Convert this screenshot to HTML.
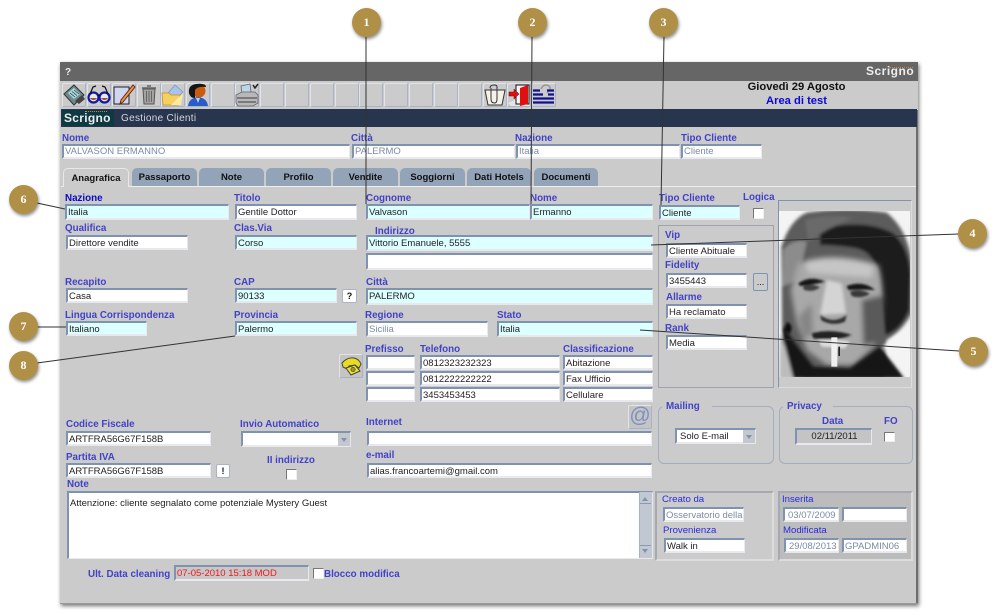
<!DOCTYPE html>
<html lang="it"><head><meta charset="utf-8"><title>Gestione Clienti</title>
<style>
html,body{margin:0;padding:0;background:#fff}
body{width:1000px;height:611px;position:relative;overflow:hidden;font-family:"Liberation Sans",Arial,sans-serif}
#w{position:absolute;left:60px;top:62px;width:858px;height:542px;background:#cbcbcb;box-shadow:1px 2px 4px rgba(0,0,0,.55)}
#c{position:absolute;left:0;top:0;width:1000px;height:611px;filter:blur(.3px)}
.f{position:absolute;box-sizing:border-box;background:#fff;border-style:solid;border-width:2px 1px 2px 2px;border-color:#7f93b0 #e8e9ee #e8e9ee #7f93b0;font-size:9.5px;line-height:13px;padding-left:1px;color:#222;white-space:nowrap;overflow:hidden}
.a{background:#dcffff}
.d{color:#7b8ba8}
.l{position:absolute;font-size:9.8px;font-weight:bold;line-height:11px;margin-top:1px;color:#4242c8;white-space:nowrap}
.n{color:#2a2ae0;font-weight:normal;font-size:9.6px}
.b{position:absolute;box-sizing:border-box;background:#cbcbcb;border:1px solid;border-color:#e2e4ea #a8b4c6 #a8b4c6 #e2e4ea;border-radius:2px}
.t{position:absolute;top:168px;height:18px;background:#93a3b8;border-radius:5px 5px 0 0;font-size:9.5px;font-weight:bold;line-height:20px;text-align:center;color:#111}
.cb{position:absolute;box-sizing:border-box;background:#fff;border:1px solid;border-color:#777 #eee #eee #777;width:11px;height:11px}
.g{position:absolute;box-sizing:border-box;border:1px solid #a3aec0;border-radius:6px}
.p{position:absolute;box-sizing:border-box;border:2px solid;border-color:#a6aab0 #dcdcdc #dcdcdc #a6aab0}
.q{position:absolute;box-sizing:border-box;background:#fff;border:1px solid #aab4c6;border-radius:2px;font-size:9px;font-weight:bold;text-align:center;color:#111;line-height:12px}
.m{position:absolute;width:29px;height:29px;border-radius:50%;background:#b08f47;box-shadow:1px 2px 3px rgba(0,0,0,.45);color:#fff;font:bold 12px/29px "Liberation Serif",serif;text-align:center}
svg{position:absolute;left:0;top:0}
</style></head><body>
<div id="w"></div>
<div id="c">
<div style="position:absolute;left:60px;top:62px;width:858px;height:19px;background:#666"></div>
<div style="position:absolute;left:916px;top:110px;width:2px;height:494px;background:#6e6e6e"></div>
<div style="position:absolute;left:60px;top:603px;width:858px;height:1px;background:#999"></div>
<div style="position:absolute;left:65px;top:67px;color:#eee;font-size:10px;font-weight:bold;line-height:11px">?</div>
<div style="position:absolute;left:866px;top:65px;color:#eee;font-size:12px;font-weight:bold;letter-spacing:.5px;line-height:13px">Scrigno</div>
<div style="position:absolute;left:889px;top:67px;width:24px;height:1px;border-top:1px dotted #d08040"></div>

<!-- toolbar -->
<div class="b" style="left:62px;top:83px;width:24px;height:24px"></div>
<div class="b" style="left:87px;top:83px;width:24px;height:24px"></div>
<div class="b" style="left:112px;top:83px;width:24px;height:24px"></div>
<div class="b" style="left:137px;top:83px;width:24px;height:24px"></div>
<div class="b" style="left:161px;top:83px;width:24px;height:24px"></div>
<div class="b" style="left:186px;top:83px;width:24px;height:24px"></div>
<div class="b" style="left:211px;top:83px;width:24px;height:24px"></div>
<div class="b" style="left:235px;top:83px;width:24px;height:24px"></div>
<div class="b" style="left:260px;top:83px;width:24px;height:24px"></div>
<div class="b" style="left:285px;top:83px;width:24px;height:24px"></div>
<div class="b" style="left:310px;top:83px;width:24px;height:24px"></div>
<div class="b" style="left:335px;top:83px;width:24px;height:24px"></div>
<div class="b" style="left:359px;top:83px;width:24px;height:24px"></div>
<div class="b" style="left:384px;top:83px;width:24px;height:24px"></div>
<div class="b" style="left:409px;top:83px;width:24px;height:24px"></div>
<div class="b" style="left:434px;top:83px;width:24px;height:24px"></div>
<div class="b" style="left:458px;top:83px;width:24px;height:24px"></div>
<div class="b" style="left:483px;top:83px;width:24px;height:24px"></div>
<div class="b" style="left:507px;top:83px;width:24px;height:24px"></div>
<div class="b" style="left:532px;top:83px;width:24px;height:24px"></div>

<div style="position:absolute;left:699px;top:81px;width:195px;text-align:center;font-size:11.2px;font-weight:bold;line-height:13px;color:#111">Giovedì 29 Agosto</div>
<div style="position:absolute;left:699px;top:95px;width:195px;text-align:center;font-size:11.2px;font-weight:bold;line-height:13px;color:#0a0ad8">Area di test</div>

<!-- navy bar -->
<div style="position:absolute;left:61px;top:109px;width:856px;height:18px;background:#27364e"></div>
<div style="position:absolute;left:62px;top:110px;width:52px;height:16px;background:#0d3a42;color:#eee;font-size:12px;font-weight:bold;letter-spacing:.3px;line-height:16px;padding-left:2px;box-sizing:border-box">Scrigno</div>
<div style="position:absolute;left:85px;top:111px;width:22px;border-top:1px dotted #d08040"></div>
<div style="position:absolute;left:121px;top:112px;color:#d4d6da;font-size:10px;line-height:13px;letter-spacing:.3px">Gestione Clienti</div>

<!-- top summary -->
<div class="l" style="left:62px;top:132px">Nome</div>
<div class="l" style="left:351px;top:132px">Città</div>
<div class="l" style="left:515px;top:132px">Nazione</div>
<div class="l" style="left:681px;top:132px">Tipo Cliente</div>
<div class="f d" style="left:62px;top:144px;width:288px;height:15px;line-height:12px">VALVASON ERMANNO</div>
<div class="f d" style="left:352px;top:144px;width:163px;height:15px;line-height:12px">PALERMO</div>
<div class="f d" style="left:516px;top:144px;width:164px;height:15px;line-height:12px">Italia</div>
<div class="f d" style="left:681px;top:144px;width:81px;height:15px;line-height:12px">Cliente</div>

<!-- tabs -->
<div style="position:absolute;left:61px;top:186px;width:855px;height:1px;background:#eee"></div>
<div class="t" style="left:63px;top:168px;width:66px;height:19px;background:#cbcbcb;border:1px solid #e8e8e8;border-bottom:0;box-sizing:border-box;line-height:19px">Anagrafica</div>
<div class="t" style="left:132px;width:65px">Passaporto</div>
<div class="t" style="left:199px;width:65px">Note</div>
<div class="t" style="left:266px;width:65px">Profilo</div>
<div class="t" style="left:333px;width:65px">Vendite</div>
<div class="t" style="left:400px;width:65px">Soggiorni</div>
<div class="t" style="left:467px;width:64px">Dati Hotels</div>
<div class="t" style="left:534px;width:64px">Documenti</div>

<!-- left column -->
<div class="l" style="left:65px;top:192px;color:#0a0ac8">Nazione</div>
<div class="f a" style="left:65px;top:204px;width:164px;height:16px">Italia</div>
<div class="l" style="left:234px;top:192px">Titolo</div>
<div class="f" style="left:235px;top:204px;width:122px;height:16px">Gentile Dottor</div>
<div class="l" style="left:65px;top:222px">Qualifica</div>
<div class="f" style="left:66px;top:235px;width:122px;height:15px">Direttore vendite</div>
<div class="l" style="left:234px;top:222px">Clas.Via</div>
<div class="f a" style="left:235px;top:235px;width:122px;height:15px">Corso</div>
<div class="l" style="left:65px;top:276px">Recapito</div>
<div class="f" style="left:66px;top:288px;width:122px;height:15px">Casa</div>
<div class="l" style="left:234px;top:276px">CAP</div>
<div class="f a" style="left:235px;top:288px;width:102px;height:15px">90133</div>
<div class="q" style="left:342px;top:289px;width:15px;height:14px">?</div>
<div class="l" style="left:65px;top:309px">Lingua Corrispondenza</div>
<div class="f a" style="left:66px;top:321px;width:81px;height:15px">Italiano</div>
<div class="l" style="left:234px;top:309px">Provincia</div>
<div class="f a" style="left:235px;top:321px;width:122px;height:15px">Palermo</div>

<!-- middle -->
<div class="l" style="left:366px;top:192px">Cognome</div>
<div class="f a" style="left:366px;top:204px;width:164px;height:16px">Valvason</div>
<div class="l" style="left:530px;top:192px">Nome</div>
<div class="f a" style="left:530px;top:204px;width:123px;height:16px">Ermanno</div>
<div class="l" style="left:375px;top:225px">Indirizzo</div>
<div class="f a" style="left:366px;top:235px;width:287px;height:16px">Vittorio Emanuele, 5555</div>
<div class="f" style="left:366px;top:253px;width:287px;height:17px"></div>
<div class="l" style="left:366px;top:276px">Città</div>
<div class="f a" style="left:366px;top:288px;width:287px;height:17px;line-height:14px">PALERMO</div>
<div class="l" style="left:365px;top:309px">Regione</div>
<div class="f d" style="left:366px;top:321px;width:122px;height:16px">Sicilia</div>
<div class="l" style="left:497px;top:309px">Stato</div>
<div class="f a" style="left:497px;top:321px;width:156px;height:16px">Italia</div>
<div class="l" style="left:365px;top:343px">Prefisso</div>
<div class="l" style="left:420px;top:343px">Telefono</div>
<div class="l" style="left:563px;top:343px">Classificazione</div>
<div class="f" style="left:366px;top:355px;width:49px;height:15px"></div>
<div class="f" style="left:420px;top:355px;width:140px;height:15px">0812323232323</div>
<div class="f" style="left:563px;top:355px;width:90px;height:15px">Abitazione</div>
<div class="f" style="left:366px;top:371px;width:49px;height:15px"></div>
<div class="f" style="left:420px;top:371px;width:140px;height:15px">0812222222222</div>
<div class="f" style="left:563px;top:371px;width:90px;height:15px">Fax Ufficio</div>
<div class="f" style="left:366px;top:387px;width:49px;height:15px"></div>
<div class="f" style="left:420px;top:387px;width:140px;height:15px">3453453453</div>
<div class="f" style="left:563px;top:387px;width:90px;height:15px">Cellulare</div>
<div class="b" style="left:339px;top:354px;width:24px;height:24px;background:#c4c4c4"></div>

<!-- right column -->
<div class="l" style="left:659px;top:192px">Tipo Cliente</div>
<div class="f a" style="left:659px;top:205px;width:81px;height:15px">Cliente</div>
<div class="l" style="left:743px;top:191px">Logica</div>
<div class="cb" style="left:753px;top:208px"></div>
<div class="p" style="left:658px;top:225px;width:116px;height:163px;border-width:1px;border-color:#a0a4aa"></div>
<div class="l" style="left:665px;top:229px">Vip</div>
<div class="f" style="left:666px;top:243px;width:81px;height:15px">Cliente Abituale</div>
<div class="l" style="left:665px;top:259px">Fidelity</div>
<div class="f" style="left:666px;top:273px;width:81px;height:15px">3455443</div>
<div class="q" style="left:753px;top:273px;width:15px;height:18px;background:#cbcbcb;border-color:#7f93b0;font-weight:normal;line-height:17px">...</div>
<div class="l" style="left:666px;top:291px">Allarme</div>
<div class="f" style="left:666px;top:304px;width:81px;height:15px">Ha reclamato</div>
<div class="l" style="left:665px;top:322px">Rank</div>
<div class="f" style="left:666px;top:335px;width:81px;height:15px">Media</div>
<div class="p" style="left:778px;top:200px;width:134px;height:188px;border-color:#7f93b0 #dcdcdc #dcdcdc #7f93b0;border-width:1px"></div>

<!-- lower -->
<div class="l" style="left:66px;top:418px">Codice Fiscale</div>
<div class="f" style="left:66px;top:431px;width:145px;height:15px">ARTFRA56G67F158B</div>
<div class="l" style="left:240px;top:418px">Invio Automatico</div>
<div class="f" style="left:241px;top:431px;width:110px;height:16px"></div>
<div style="position:absolute;left:338px;top:433px;width:12px;height:13px;background:#c4c8ce"></div>
<div style="position:absolute;left:341px;top:438px;border:3px solid transparent;border-top:4px solid #7f93b0"></div>
<div class="l" style="left:66px;top:451px">Partita IVA</div>
<div class="f" style="left:66px;top:463px;width:145px;height:15px">ARTFRA56G67F158B</div>
<div class="q" style="left:216px;top:464px;width:14px;height:14px">!</div>
<div class="l" style="left:267px;top:454px">II indirizzo</div>
<div class="cb" style="left:286px;top:469px"></div>
<div class="l" style="left:366px;top:416px">Internet</div>
<div class="f" style="left:367px;top:431px;width:285px;height:15px"></div>
<div class="l" style="left:366px;top:449px">e-mail</div>
<div class="f" style="left:367px;top:463px;width:285px;height:15px">alias.francoartemi@gmail.com</div>
<div class="b" style="left:628px;top:405px;width:24px;height:24px;background:#c4c4c4"></div>
<div style="position:absolute;left:628px;top:405px;width:24px;height:23px;text-align:center;font-size:21px;line-height:22px;color:#7f8fc0">@</div>

<div class="l" style="left:67px;top:478px">Note</div>
<div class="f" style="left:67px;top:491px;width:586px;height:68px;padding:4px 1px;font-size:9.5px;border-width:2px 1px 1px 2px">Attenzione: cliente segnalato come potenziale Mystery Guest</div>
<div style="position:absolute;left:639px;top:492px;width:13px;height:66px;background:#c2c8d2;border-left:1px solid #a6b2c4;box-sizing:border-box"></div>
<div style="position:absolute;left:642px;top:497px;border:3px solid transparent;border-bottom:4px solid #7f93b0;border-top:0"></div>
<div style="position:absolute;left:642px;top:549px;border:3px solid transparent;border-top:4px solid #7f93b0;border-bottom:0"></div>
<div style="position:absolute;left:640px;top:503px;width:11px;height:1px;background:#8a9ab2"></div>
<div style="position:absolute;left:640px;top:545px;width:11px;height:1px;background:#8a9ab2"></div>

<div class="l" style="left:88px;top:568px">Ult. Data cleaning</div>
<div class="f" style="left:174px;top:565px;width:135px;height:16px;background:#c8c8c8;color:#f01818">07-05-2010 15:18 MOD</div>
<div class="cb" style="left:313px;top:568px"></div>
<div class="l" style="left:324px;top:568px">Blocco modifica</div>

<!-- mailing / privacy -->
<div class="g" style="left:658px;top:406px;width:116px;height:58px"></div>
<div style="position:absolute;left:662px;top:402px;width:50px;height:8px;background:#cbcbcb"></div>
<div class="l" style="left:666px;top:400px">Mailing</div>
<div class="f" style="left:675px;top:428px;width:81px;height:16px;padding-left:3px">Solo E-mail</div>
<div style="position:absolute;left:743px;top:430px;width:12px;height:13px;background:#c4c8ce"></div>
<div style="position:absolute;left:746px;top:435px;border:3px solid transparent;border-top:4px solid #7f93b0"></div>
<div class="g" style="left:779px;top:406px;width:134px;height:58px"></div>
<div style="position:absolute;left:783px;top:402px;width:50px;height:8px;background:#cbcbcb"></div>
<div class="l" style="left:787px;top:400px">Privacy</div>
<div class="l" style="left:822px;top:415px">Data</div>
<div class="l" style="left:884px;top:415px">FO</div>
<div class="f" style="left:795px;top:428px;width:77px;height:17px;background:#c4c4c4;text-align:center">02/11/2011</div>
<div class="cb" style="left:884px;top:432px;height:10px"></div>

<!-- audit panels -->
<div class="p" style="left:655px;top:491px;width:119px;height:70px"></div>
<div class="p" style="left:778px;top:491px;width:135px;height:70px;background:#bcbcbc"></div>
<div class="l n" style="left:662px;top:493px">Creato da</div>
<div class="f d" style="left:663px;top:507px;width:81px;height:15px">Osservatorio della</div>
<div class="l n" style="left:663px;top:524px">Provenienza</div>
<div class="f" style="left:664px;top:538px;width:81px;height:15px">Walk in</div>
<div class="l n" style="left:782px;top:493px">Inserita</div>
<div class="f d" style="left:783px;top:507px;width:56px;height:15px;padding-left:3px">03/07/2009</div>
<div class="f" style="left:842px;top:507px;width:65px;height:15px"></div>
<div class="l n" style="left:783px;top:524px">Modificata</div>
<div class="f d" style="left:784px;top:538px;width:55px;height:15px;padding-left:3px">29/08/2013</div>
<div class="f d" style="left:842px;top:538px;width:65px;height:15px">GPADMIN06</div>

<!-- photo and icons -->
<svg width="1000" height="611" viewBox="0 0 1000 611">
<defs>
<clipPath id="pc"><rect x="779" y="211" width="131" height="166"/></clipPath>
<filter id="b1" x="-30%" y="-30%" width="160%" height="160%"><feGaussianBlur stdDeviation="3"/></filter>
<filter id="b2" x="-30%" y="-30%" width="160%" height="160%"><feGaussianBlur stdDeviation="5"/></filter>
<filter id="b3" x="-30%" y="-30%" width="160%" height="160%"><feGaussianBlur stdDeviation="8"/></filter>
</defs>
<g clip-path="url(#pc)">
<rect x="779" y="211" width="131" height="166" fill="#f4f4f4"/>
<g transform="translate(770 200) scale(.3333)">
<g filter="url(#b2)">
<path d="M34 140Q60 60 110 38Q230 20 350 38Q415 90 425 190L425 340Q395 395 350 420L340 530L100 530L50 440L36 370Z" fill="#5c5c5c"/>
<path d="M150 85Q290 55 370 100Q415 140 422 220L418 330Q390 395 345 405L325 240Q320 160 260 145Q200 135 150 135Z" fill="#1e1e1e"/>
<path d="M105 60Q170 42 250 52L170 90L115 125Z" fill="#6a6a6a"/>
<path d="M40 150Q70 115 110 125L85 240L36 260Z" fill="#8c8c8c"/>
</g>
<g filter="url(#b3)">
<path d="M85 190Q190 150 325 195Q345 270 335 360L310 440L250 495L170 495L110 450L80 370L62 270Z" fill="#a8a8a8"/>
<path d="M105 185Q190 165 310 195L305 232L115 218Z" fill="#c6c6c6"/>
<path d="M275 300L342 285L335 420L280 440Z" fill="#5a5a5a"/>
<path d="M85 350L125 310L130 400L100 420Z" fill="#868686"/>
</g>
<g filter="url(#b2)">
<path d="M170 240L215 250L228 340L150 345Z" fill="#d4d4d4"/>
<path d="M40 375L72 425L130 500L240 505L330 440L405 535L30 535Z" fill="#141414"/>
<path d="M338 440Q380 480 412 535L425 535L425 385L372 412Z" fill="#f4f4f4"/>
<path d="M30 400L45 440L70 535L28 535Z" fill="#bcbcbc"/>
</g>
<g filter="url(#b1)">
<path d="M85 250Q120 225 165 245Q130 255 90 258Z" fill="#181818"/>
<path d="M100 258Q130 250 150 262Q125 280 100 268Z" fill="#404040"/>
<path d="M230 258Q280 240 315 270Q280 268 235 270Z" fill="#181818"/>
<path d="M240 275Q275 265 300 282Q270 298 245 288Z" fill="#383838"/>
<path d="M150 345Q190 375 230 345L225 365Q190 380 155 362Z" fill="#333"/>
<path d="M125 400Q185 385 245 405Q200 425 130 415Z" fill="#202020"/>
<path d="M145 420Q190 415 240 425L225 445L155 440Z" fill="#dcdcdc"/>
<path d="M50 368Q60 365 65 385L60 400L42 392Z" fill="#0c0c0c"/>
</g>
<rect x="184" y="412" width="18" height="88" fill="#f0f0f0"/>
<rect x="205" y="440" width="5" height="28" fill="#222"/>
</g>
</g>

<!-- fax -->
<g transform="translate(62 83)"><path d="M2 11L12 2L22 12L12 22Z" fill="#6f8a8c" stroke="#333" stroke-width="1"/><path d="M6 10L12 5L18 11L12 16Z" fill="#a8dcd8"/><path d="M8 10L13 14M10 8.500L15 12.500M12 7L17 11" stroke="#335" stroke-width=".8"/><path d="M13 18L20 12L23 16L17 21Z" fill="#444"/></g>
<!-- glasses -->
<g transform="translate(87 83)" fill="none"><circle cx="6.500" cy="14.500" r="5" fill="#e8e8f0" stroke="#1018a0" stroke-width="2.200"/><circle cx="17.500" cy="14.500" r="5" fill="#e8e8f0" stroke="#1018a0" stroke-width="2.200"/><path d="M3 15A4 4 0 0 0 10 15Z" fill="#a85030"/><path d="M14 15A4 4 0 0 0 21 15Z" fill="#a85030"/><path d="M11 13Q12 11 13 13M3 11L6 4L9 3M21 11L18 4L15 3" stroke="#111" stroke-width="1.200"/></g>
<!-- note -->
<g transform="translate(112 83)"><path d="M2 4H17V21H2Z" fill="#d0d6f0" stroke="#222" stroke-width="1"/><path d="M21 2L23 4L11 19L8 21L9 17Z" fill="#e0a040" stroke="#702020" stroke-width="1"/></g>
<!-- trash -->
<g transform="translate(137 83)"><path d="M6 6H18L17 21H7Z" fill="#a4a4a0" stroke="#555" stroke-width="1"/><path d="M5 5H19M10 3H14" stroke="#666" stroke-width="1.500"/><path d="M9.500 8V19M12 8V19M14.500 8V19" stroke="#666" stroke-width="1"/></g>
<!-- folder -->
<g transform="translate(161 83)"><path d="M7 10L14 2L22 9L15 16Z" fill="#a8c4ec" stroke="#8098c0" stroke-width=".8"/><path d="M1 10H8L10 12H19L17 22H2Z" fill="#f4d060" stroke="#c09030" stroke-width=".8"/><path d="M10 22L22 10L20 22Z" fill="#f8e8a0"/></g>
<!-- person -->
<g transform="translate(186 83)"><path d="M2 23Q3 15 12 14Q21 15 22 23Z" fill="#2a5cc8"/><path d="M10 15L12 20L14 15Z" fill="#bcd0f0"/><circle cx="13" cy="8" r="6.500" fill="#c85c10"/><path d="M3 10Q2 2 10 1Q20 0 20 4Q12 3 9 7L9 15Q4 15 3 10Z" fill="#161616"/></g>
<!-- printer -->
<g transform="translate(235 83)"><path d="M6 3L15 1L16 9L7 11Z" fill="#b8d8e8" stroke="#667" stroke-width=".8"/><path d="M1 12L7 9H20L23 12V20L18 23H3L1 20Z" fill="#b8b8b8" stroke="#666" stroke-width=".8"/><path d="M2 15H22M3 19H21" stroke="#555" stroke-width="1.200"/><path d="M18 2L20 5L23 1" stroke="#222" fill="none" stroke-width="1.500"/></g>
<!-- clip note -->
<g transform="translate(483 83)"><path d="M2 7H22L19 22H5Z" fill="#f4f2e8" stroke="#333" stroke-width="1"/><path d="M8 5V16Q8 20 11.500 20Q14 20 14 16V4Q14 2 11.500 2Q7 2 7 5" fill="none" stroke="#333" stroke-width="1"/></g>
<!-- door -->
<g transform="translate(507 83)"><path d="M1 20L8 17H23V23H4Z" fill="#e6e6e6"/><rect x="9" y="2" width="13" height="19" fill="#f4f4f4" stroke="#111" stroke-width="1"/><path d="M13 5L21 2V21L13 23Z" fill="#e01010"/><path d="M2 9H7V6L12 11L7 16V13H2Z" fill="#e01010" stroke="#700" stroke-width=".5"/></g>
<!-- help -->
<g transform="translate(532 83)"><path d="M9 6Q12 0 17 3Q20 6 15 10" fill="none" stroke="#999" stroke-width="1.500"/><path d="M1 7.500H8M15 7.500H22M1 11.500H11M16 11.500H22M1 15.500H22M1 19.500H22" stroke="#10108c" stroke-width="2.200"/></g>
<!-- phone -->
<g transform="translate(339 354)"><path d="M3 9Q8 3 15 4Q20 5 22 10L20 14L16 11L10 12L8 15L4 13Z" fill="#e8dc20" stroke="#444" stroke-width="1"/><path d="M7 14L16 11L21 17L12 21Z" fill="#f0e42c" stroke="#444" stroke-width="1"/><circle cx="14" cy="15.500" r="2.200" fill="#a09820" stroke="#444" stroke-width=".7"/></g>

<!-- callout lines -->
<g stroke="#333" stroke-width="1" fill="none">
<path d="M366 36L366 204"/><path d="M532 36L531 204"/><path d="M664 36L661 205"/>
<path d="M959 234L651 245"/><path d="M959 351L640 330"/>
<path d="M37 203L65 209"/><path d="M37 327L66 327"/><path d="M37 363L235 336"/>
</g>
</svg>

<div class="m" style="left:352px;top:8px">1</div>
<div class="m" style="left:518px;top:8px">2</div>
<div class="m" style="left:649px;top:8px">3</div>
<div class="m" style="left:958px;top:219px">4</div>
<div class="m" style="left:959px;top:337px">5</div>
<div class="m" style="left:9px;top:185px">6</div>
<div class="m" style="left:9px;top:312px">7</div>
<div class="m" style="left:9px;top:351px">8</div>
</div>
</body></html>
